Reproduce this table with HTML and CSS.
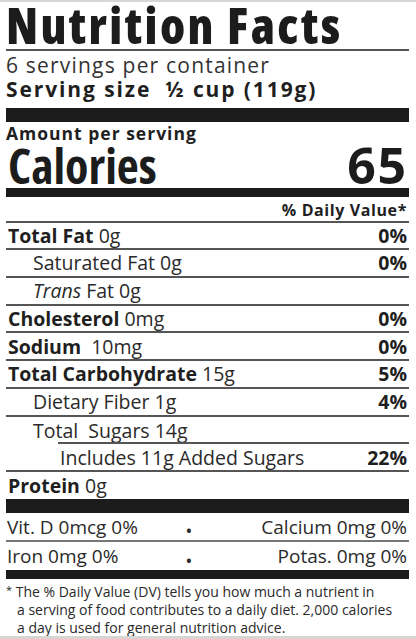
FILE: index.html
```html
<!DOCTYPE html>
<html>
<head>
<meta charset="utf-8">
<link rel="stylesheet" href="styles.css">
</head>
<body>
<div class="label">
  <div class="title">Nutrition Facts</div>
  <div class="servings">
    <div class="per">6 servings per container</div>
    <div class="size"><span>Serving size</span><span>½ cup (119g)</span></div>
  </div>
  <div class="bar bar-thick"></div>
  <div class="amount">Amount per serving</div>
  <div class="calories"><span>Calories</span><span class="kcal">65</span></div>
  <div class="bar bar-mid"></div>
  <div class="dv">% Daily Value*</div>
  <div class="row first"><span><b>Total Fat</b> 0g</span><b>0%</b></div>
  <div class="row ind1"><span>Saturated Fat 0g</span><b>0%</b></div>
  <div class="row ind1"><span><i>Trans</i> Fat 0g</span></div>
  <div class="row"><span><b>Cholesterol</b> 0mg</span><b>0%</b></div>
  <div class="row"><span><b>Sodium</b>&nbsp; 10mg</span><b>0%</b></div>
  <div class="row"><span><b>Total Carbohydrate</b> 15g</span><b>5%</b></div>
  <div class="row ind1"><span>Dietary Fiber 1g</span><b>4%</b></div>
  <div class="row ind1 sugars"><span>Total&nbsp; Sugars 14g</span></div>
  <div class="row ind2"><span>Includes 11g Added Sugars</span><b>22%</b></div>
  <div class="row noline"><span><b>Protein</b> 0g</span></div>
  <div class="bar bar-thick"></div>
  <div class="vit"><span>Vit. D 0mcg 0%</span><span class="dot">•</span><span class="r">Calcium 0mg 0%</span></div>
  <div class="vit noline"><span>Iron 0mg 0%</span><span class="dot">•</span><span class="r">Potas. 0mg 0%</span></div>
  <div class="bar bar-mid"></div>
  <p class="foot"><span class="star">*</span> The % Daily Value (DV) tells you how much a nutrient in<br>a serving of food contributes to a daily diet. 2,000 calories<br>a day is used for general nutrition advice.</p>
</div>
</body>
</html>
```

FILE: styles.css
```css
html, body {
  margin: 0;
  padding: 0;
  background: #fff;
}
body {
  width: 416px;
  height: 639px;
  border-top: 2px solid #d8d6d2;
  border-bottom: 3px solid #d8d6d2;
  box-sizing: border-box;
  font-family: "Open Sans", "Noto Sans", sans-serif;
  color: #222;
}
.label {
  margin: 0 7px 0 6px;
}
.title {
  font-size: 49px;
  font-weight: 800;
  font-stretch: 75%;
  letter-spacing: 2.4px;
  line-height: 47px;
  height: 47px;
  color: #1c1c1c;
  border-bottom: 2px solid #555;
  white-space: nowrap;
}
.servings {
  font-size: 21px;
  line-height: 24px;
  padding-top: 2px;
  height: 57px;
  box-sizing: border-box;
}
.per { color: #333; letter-spacing: 1.2px; }
.size { font-weight: 700; display: flex; gap: 14px; letter-spacing: 1.9px; color: #1f1f1f; }
.bar { background: #1b1b1b; }
.bar-thick { height: 14px; }
.bar-mid { height: 9px; }
.amount {
  font-size: 17.5px;
  font-weight: 700;
  letter-spacing: 1px;
  line-height: 22px;
  height: 21px;
  color: #1f1f1f;
}
.calories {
  display: flex;
  justify-content: space-between;
  font-size: 48px;
  font-weight: 700;
  font-stretch: 75%;
  line-height: 45px;
  height: 45px;
  padding: 0 3px 0 2px;
  color: #1c1c1c;
}
.kcal {
  font-stretch: 100%;
  font-size: 50px;
  letter-spacing: 1.5px;
  margin-right: -1.5px;
}
.dv {
  text-align: right;
  font-size: 16px;
  font-weight: 700;
  letter-spacing: 0.6px;
  line-height: 26px;
  height: 24px;
  border-bottom: 2px solid #555;
  padding-right: 2px;
  color: #1f1f1f;
}
.row {
  display: flex;
  justify-content: space-between;
  align-items: center;
  font-size: 19.5px;
  height: 25.75px;
  border-bottom: 2px solid #555;
  padding: 0 2px;
  color: #2a2a2a;
}
.row.first { height: 25px; }
.row b { font-weight: 700; color: #1f1f1f; }
.row.noline { border-bottom: none; height: 27px; }
.ind1 { padding-left: 27px; }
.ind2 { padding-left: 54px; }
.sugars { border-bottom: none; position: relative; height: 27.75px; }
.sugars::after {
  content: "";
  position: absolute;
  left: 52px;
  right: 0;
  bottom: 0;
  height: 2px;
  background: #555;
}
.vit {
  display: grid;
  grid-template-columns: 170px 24px 1fr;
  align-items: center;
  font-size: 19px;
  height: 27px;
  border-bottom: 2px solid #777;
  color: #2a2a2a;
  padding: 0 2px 0 1px;
}
.vit.noline { border-bottom: none; height: 28px; }
.vit .dot { text-align: center; font-size: 14px; font-weight: 700; padding-top: 8px; }
.vit .r { text-align: right; }
.foot {
  margin: 0;
  padding: 2px 0 0 11px;
  text-indent: -11px;
  font-size: 14px;
  line-height: 18px;
  color: #2a2a2a;
  white-space: nowrap;
}
.foot .star { font-size: 11px; vertical-align: 3px; }
```
